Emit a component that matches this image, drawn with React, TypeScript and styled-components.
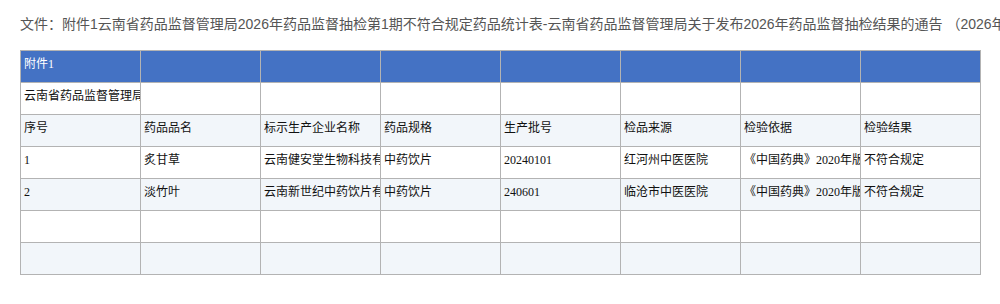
import React from "react";
import styled, { createGlobalStyle } from "styled-components";

const Global = createGlobalStyle`
  html, body { margin: 0; padding: 0; background: #fff; overflow: hidden; }
`;

const Page = styled.div`
  padding: 12px 20px 0 20px;
  width: 1000px;
  box-sizing: border-box;
  overflow: hidden;
`;

const Title = styled.div`
  font-family: "Liberation Sans", "Noto Sans CJK SC", sans-serif;
  font-size: 14px;
  line-height: 24px;
  color: #555;
  white-space: nowrap;
  margin-bottom: 14px;
`;

const Table = styled.table`
  border-collapse: collapse;
  table-layout: fixed;
  width: 961px;
  font-family: "Liberation Serif", "Noto Sans CJK SC", serif;
  font-size: 12px;
`;

const Row = styled.tr<{ $kind: "head" | "light" | "white" }>`
  height: 32px;
  background: ${(p) =>
    p.$kind === "head" ? "#4472c4" : p.$kind === "light" ? "#f2f6fa" : "#ffffff"};
  color: ${(p) => (p.$kind === "head" ? "#ffffff" : "#111")};
`;

const Cell = styled.td`
  width: 120px;
  height: 32px;
  box-sizing: border-box;
  border: 1px solid #b3b3b3;
  padding: 5px 0 0 3px;
  vertical-align: top;
  line-height: 16px;
  white-space: nowrap;
  overflow: hidden;
`;

const cols = 8;
const rows: { kind: "head" | "light" | "white"; cells: string[] }[] = [
  { kind: "head", cells: ["附件1"] },
  { kind: "white", cells: ["云南省药品监督管理局2026年药品监督抽检第1期不符合规定药品统计表"] },
  {
    kind: "light",
    cells: ["序号", "药品品名", "标示生产企业名称", "药品规格", "生产批号", "检品来源", "检验依据", "检验结果"],
  },
  {
    kind: "white",
    cells: ["1", "炙甘草", "云南健安堂生物科技有限公司", "中药饮片", "20240101", "红河州中医医院", "《中国药典》2020年版一部", "不符合规定"],
  },
  {
    kind: "light",
    cells: ["2", "淡竹叶", "云南新世纪中药饮片有限公司", "中药饮片", "240601", "临沧市中医医院", "《中国药典》2020年版一部", "不符合规定"],
  },
  { kind: "white", cells: [] },
  { kind: "light", cells: [] },
];

export default function App() {
  return (
    <Page>
      <Global />
      <Title>
        文件：附件1云南省药品监督管理局2026年药品监督抽检第1期不符合规定药品统计表-云南省药品监督管理局关于发布2026年药品监督抽检结果的通告 （2026年第1期）
      </Title>
      <Table>
        <tbody>
          {rows.map((r, i) => (
            <Row key={i} $kind={r.kind}>
              {Array.from({ length: cols }).map((_, j) => (
                <Cell key={j}>{r.cells[j] ?? ""}</Cell>
              ))}
            </Row>
          ))}
        </tbody>
      </Table>
    </Page>
  );
}
